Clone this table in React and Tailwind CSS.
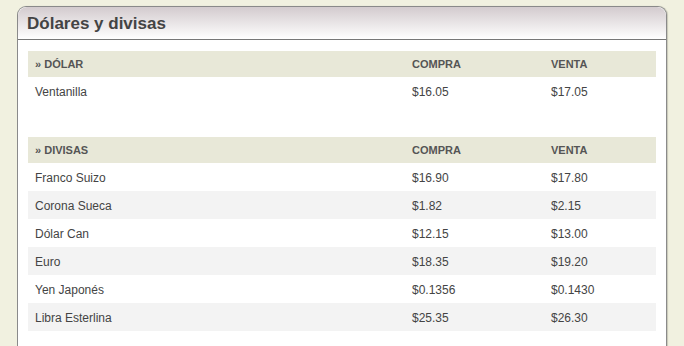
const dolar = [{ name: "Ventanilla", compra: "$16.05", venta: "$17.05" }];

const divisas = [
  { name: "Franco Suizo", compra: "$16.90", venta: "$17.80" },
  { name: "Corona Sueca", compra: "$1.82", venta: "$2.15" },
  { name: "Dólar Can", compra: "$12.15", venta: "$13.00" },
  { name: "Euro", compra: "$18.35", venta: "$19.20" },
  { name: "Yen Japonés", compra: "$0.1356", venta: "$0.1430" },
  { name: "Libra Esterlina", compra: "$25.35", venta: "$26.30" },
];

function RateTable({ title, rows }) {
  return (
    <div className="text-[12px] text-[#444]">
      <div className="flex h-[26px] items-center bg-[#e8e8d8] text-[11px] font-bold text-[#555]">
        <div className="w-[377px] pl-[7px]">» {title}</div>
        <div className="w-[139px] pl-[7px]">COMPRA</div>
        <div className="pl-[7px]">VENTA</div>
      </div>
      {rows.map((r, i) => (
        <div
          key={r.name}
          className={`flex h-[28px] items-center pt-[1px] ${i % 2 === 1 ? "bg-[#f3f3f3]" : "bg-white"}`}
        >
          <div className="w-[377px] pl-[7px]">{r.name}</div>
          <div className="w-[139px] pl-[7px]">{r.compra}</div>
          <div className="pl-[7px]">{r.venta}</div>
        </div>
      ))}
    </div>
  );
}

export default function App() {
  return (
    <div
      className="h-[346px] overflow-hidden bg-[#f1f1e0] pl-[17px] pt-[6px]"
      style={{ fontFamily: '"Liberation Sans", Arial, sans-serif' }}
    >
      <div className="w-[650px] rounded-t-[9px] border border-b-0 border-[#8a8a8a] bg-white shadow-[1px_0_1px_#c8c8b8]">
        <div className="flex h-[33px] items-center rounded-t-[9px] border-b border-[#777] bg-gradient-to-b from-[#d3cbce] to-white pl-[9px] pt-[2px]">
          <h2 className="text-[17px] font-bold text-[#444]">Dólares y divisas</h2>
        </div>
        <div className="px-[10px] pb-[30px] pt-[11px]">
          <RateTable title="DÓLAR" rows={dolar} />
          <div className="h-[32px]" />
          <RateTable title="DIVISAS" rows={divisas} />
        </div>
      </div>
    </div>
  );
}
